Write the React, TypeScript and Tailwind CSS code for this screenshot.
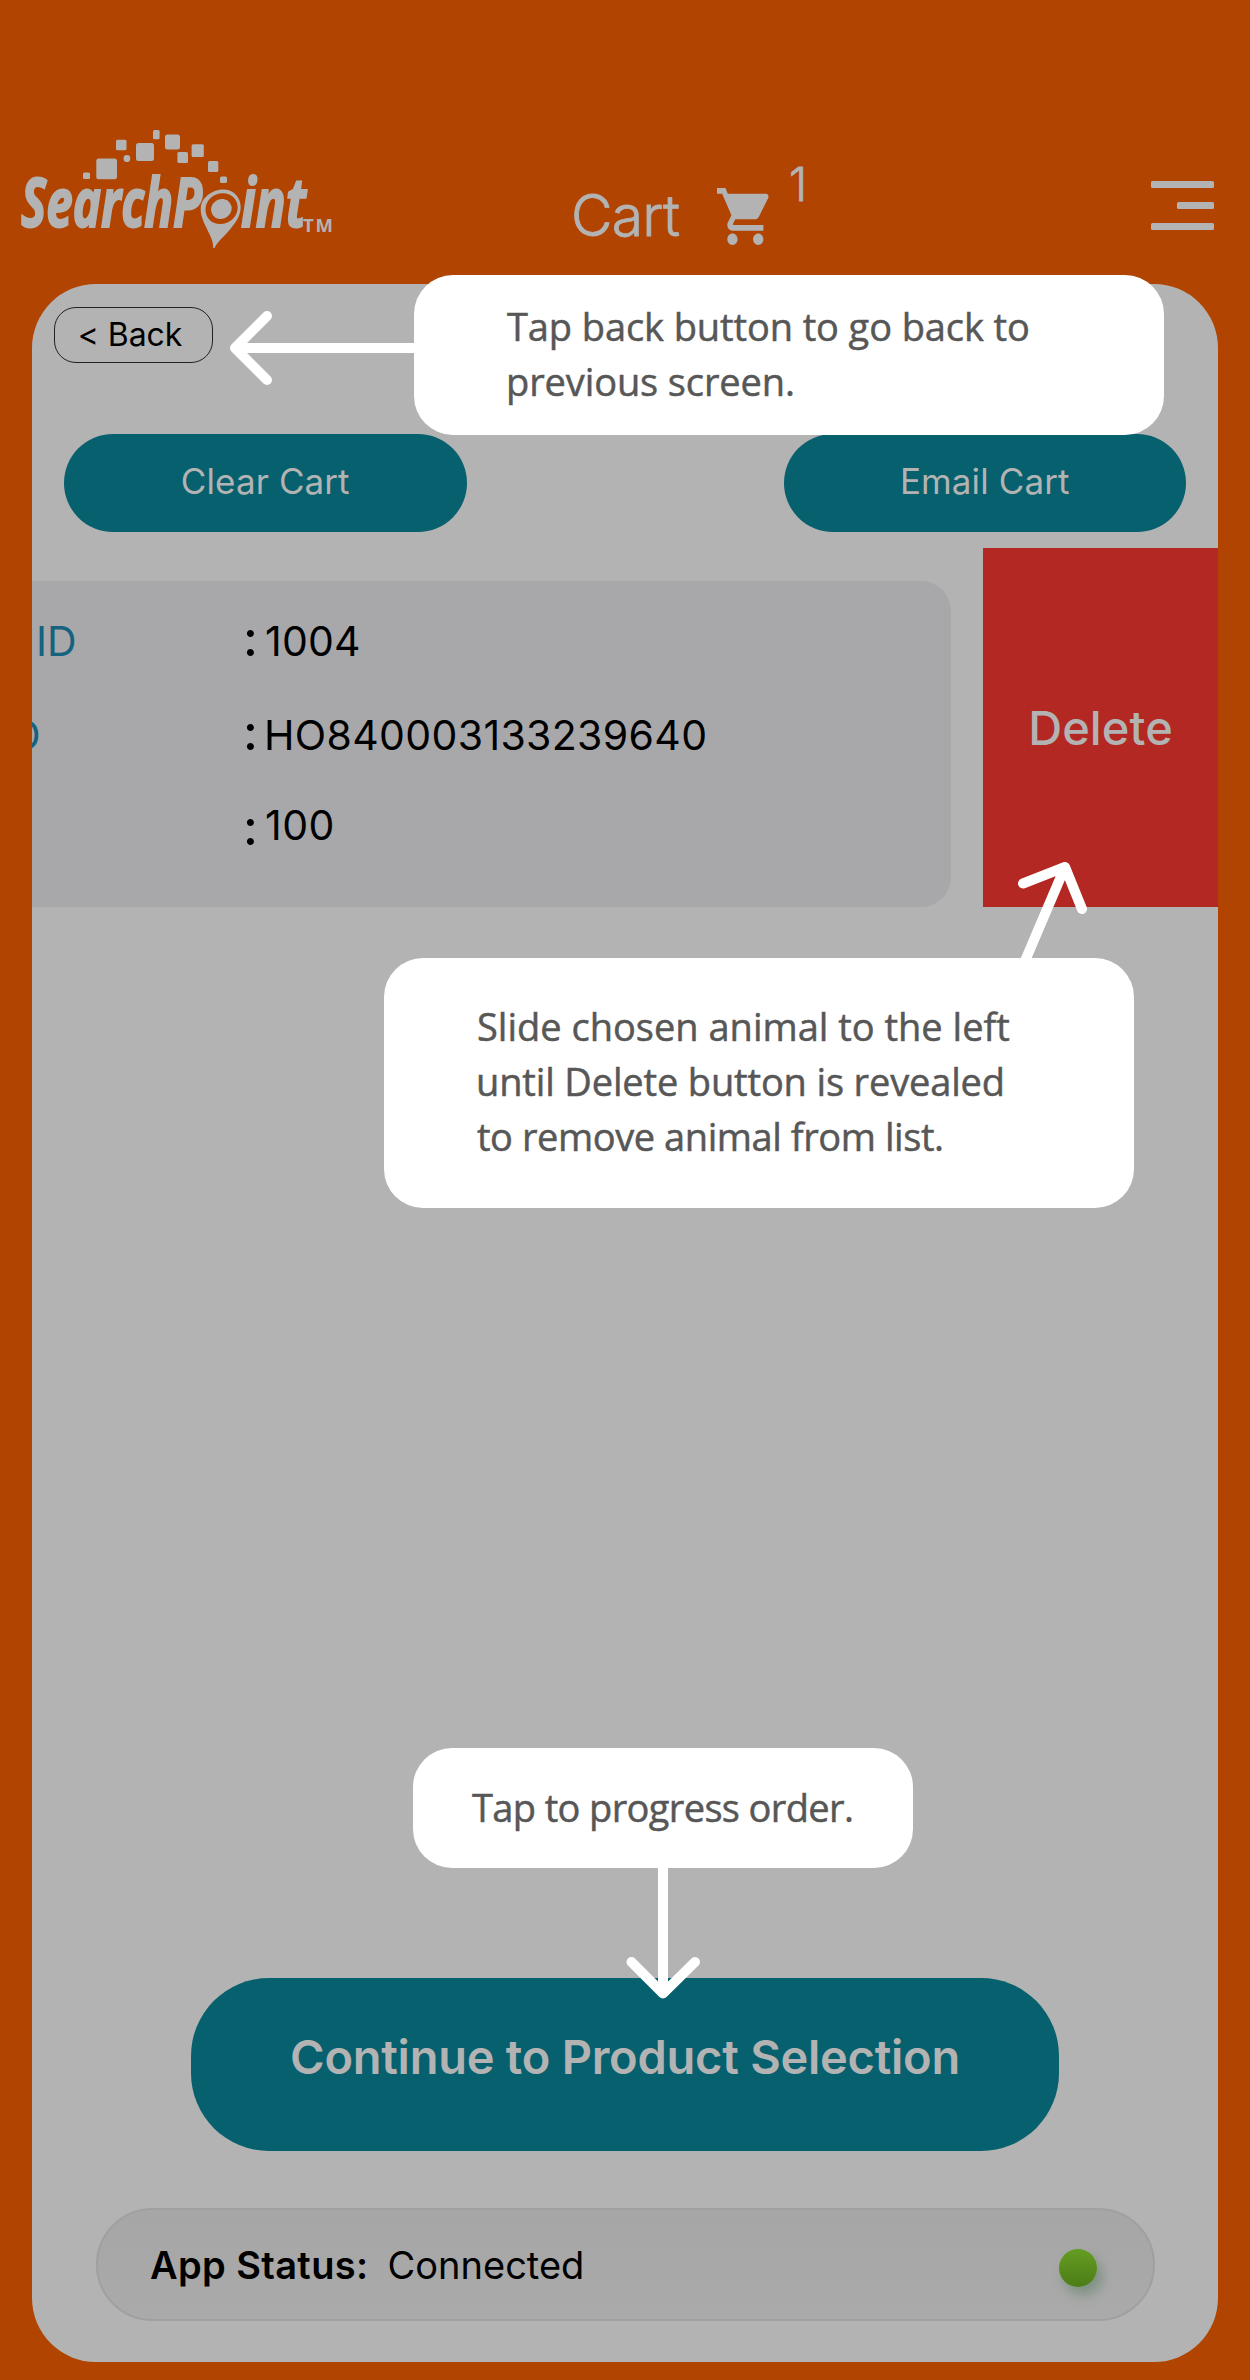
import React from 'react';

const logoSquares: [number, number, number, number, number][] = [
  [83, 172.5, 7, 6.5, 1.5],
  [96.3, 158.5, 20.7, 20.8, 2.5],
  [116, 139.8, 10.5, 10.4, 1.5],
  [123.6, 155, 6.6, 7, 3],
  [136, 143, 18, 18, 2.5],
  [153, 130, 6.6, 9.3, 1.5],
  [165, 134.5, 15, 15, 2.5],
  [177.4, 152, 10.6, 11, 1.5],
  [191.6, 144.3, 12.2, 12.8, 1.5],
  [208, 161, 10.3, 11, 1.5],
  [220, 176.5, 7, 6.5, 1.5],
];

function Logo() {
  return (
    <svg className="h-[284px] w-[360px] shrink-0" viewBox="0 0 360 284" fill="#b3b3b3" aria-label="SearchPoint">
      {logoSquares.map(([x, y, w, h, r]) => (
        <rect key={`${x}-${y}`} x={x} y={y} width={w} height={h} rx={r} />
      ))}
      <g fontFamily='"Open Sans", sans-serif' fontStyle="italic" fontWeight="700" stroke="#b3b3b3" strokeWidth="2">
        <text x="21" y="226.500" fontSize="67.500" textLength="181" lengthAdjust="spacingAndGlyphs">
          SearchP
        </text>
        <text x="241" y="226.500" fontSize="67.500" textLength="65" lengthAdjust="spacingAndGlyphs">
          int
        </text>
      </g>
      <path
        fillRule="evenodd"
        d="M224.500 189.500c9.800 0.500 16.500 8.500 16.200 18.500c-0.400 8.500-5.700 15.500-11.200 22c-6.500 7.500-12.300 12-14.900 18h-1.400c0.300-7-3.200-12.500-6.700-20c-3.200-6.800-6.500-13.500-5.700-21c1-10.200 12.700-18 23.700-17.500zM222.800 193.300c-9.500 0-17.300 7.200-17.300 16.300c0 8.700 6.300 14.400 14.700 14.400c9.500 0 17.500-7.300 17.500-16.500c0-8.500-6.500-14.200-14.900-14.200z"
      />
      <ellipse cx="221.300" cy="209" rx="10.600" ry="9.800" transform="rotate(-35 221.300 209)" />
      <text x="303" y="232" fontSize="18.500" fontWeight="700" fontFamily='"Open Sans", sans-serif' textLength="30">
        TM
      </text>
    </svg>
  );
}

function CartIcon() {
  return (
    <svg className="h-[57px] w-[54px]" viewBox="1 2 20.960 20" preserveAspectRatio="none" fill="#b3b3b3">
      <path d="M7 18c-1.100 0-1.990.9-1.990 2S5.900 22 7 22s2-.9 2-2-.9-2-2-2zM1 2v2h2l3.600 7.590-1.350 2.450c-.16.280-.25.610-.25.960 0 1.100.9 2 2 2h12v-2H7.420c-.14 0-.25-.11-.25-.25l.03-.12.900-1.630h7.450c.75 0 1.410-.41 1.750-1.030l3.580-6.490c.08-.14.120-.31.120-.48 0-.55-.45-1-1-1H5.210l-.94-2H1zm16 16c-1.100 0-1.990.9-1.990 2s.89 2 1.990 2 2-.9 2-2-.9-2-2-2z" />
    </svg>
  );
}

function Header() {
  return (
    <header className="flex h-[284px] items-start text-[#b3b3b3]">
      <Logo />
      <h1 className="mt-[186px] ml-[211px] w-[146px] text-[57px] leading-[60px] font-light tracking-[-0.73px] [-webkit-text-stroke:0.8px_#b3b3b3]">
        Cart
      </h1>
      <div className="mt-[188px]">
        <CartIcon />
      </div>
      <span className="mt-[164px] ml-[18px] w-5 text-[46px] leading-[40px] font-light [-webkit-text-stroke:0.8px_#b3b3b3]">
        1
      </span>
      <button className="mt-[181px] ml-[342px] flex w-[63px] flex-col items-end gap-[14px]" aria-label="Menu">
        <span className="h-[7px] w-[63px] rounded-[1.5px] bg-[#b3b3b3]" />
        <span className="h-[7px] w-[37px] rounded-[1.5px] bg-[#b3b3b3]" />
        <span className="h-[7px] w-[63px] rounded-[1.5px] bg-[#b3b3b3]" />
      </button>
    </header>
  );
}

function PillButton({ children }: { children: React.ReactNode }) {
  return (
    <button className="h-[98px] w-[402.500px] rounded-full bg-[#07606e] pb-[3px] text-[35px] leading-none tracking-[0.1px] text-[#b3b3b3]">
      {children}
    </button>
  );
}

function CartItem() {
  return (
    <div className="mt-[16px] flex h-[359px] items-end">
      <div className="h-[326px] w-[919px] shrink-0 rounded-r-[30px] bg-[#a8a8aa] pt-[13px] text-[41px] leading-none text-black">
        <div className="flex h-[94px] items-center">
          <span className="w-[211px] text-[#16627f]">
            <span className="ml-[4px]">ID</span>
          </span>
          <span className="w-[22px] -translate-y-[3px] text-[49px] font-medium">:</span>
          <span className="tracking-[0.2px]">1004</span>
        </div>
        <div className="flex h-[94px] items-center">
          <span className="w-[211px] text-[#16627f]">
            <span className="-ml-[32px]">ID</span>
          </span>
          <span className="w-[22px] -translate-y-[3px] text-[49px] font-medium">:</span>
          <span className="-ml-px tracking-[0.35px]">HO840003133239640</span>
        </div>
        <div className="flex h-[86px] items-center">
          <span className="w-[211px]" />
          <span className="w-[22px] translate-y-[2px] text-[49px] font-medium">:</span>
          <span className="tracking-[0.5px]">100</span>
        </div>
      </div>
      <button className="ml-8 h-[359px] w-[235px] shrink-0 bg-[#b32822] text-[47px] leading-none font-medium tracking-[0.1px] text-[#b3b3b3]">
        Delete
      </button>
    </div>
  );
}

function StatusBar() {
  return (
    <div className="mt-[57px] ml-16 flex h-[113px] w-[1059px] items-center rounded-full border-2 border-[#a0a0a0] bg-linear-to-b from-[#a6a6a6] to-[#aaaaaa] pr-[56px] pl-[52px] text-[38px] leading-none text-black">
      <span className="font-semibold tracking-[0.37px]">App Status:</span>
      <span className="ml-[19px]">Connected</span>
      <span className="mt-[6px] ml-auto size-[38px] rounded-full bg-linear-to-b from-[#659d22] to-[#4c7d17] shadow-[5px_8px_12px_rgba(60,110,70,0.4)]" />
    </div>
  );
}

const calloutText =
  'font-["Open_Sans",sans-serif] text-[38px] leading-[55px] text-[#575757] [-webkit-text-stroke:0.5px_#575757]';

export default function App() {
  return (
    <div className="relative h-[2380px] w-[1250px] overflow-hidden bg-[#b14400] font-[Inter,sans-serif]">
      <Header />

      <main className="ml-8 flex h-[2078px] w-[1186px] flex-col overflow-hidden rounded-[64px] bg-[#b3b3b3]">
        <button className="mt-[23px] ml-[22px] h-[56px] w-[159px] shrink-0 rounded-[22px] border border-[#222] pr-[7px] text-[32px] leading-none tracking-[-0.1px] text-black">
          &lt; Back
        </button>

        <div className="mt-[71px] ml-8 flex w-[1122px] justify-between">
          <PillButton>Clear Cart</PillButton>
          <PillButton>Email Cart</PillButton>
        </div>

        <CartItem />

        <button className="mt-[1071px] ml-[159px] h-[173px] w-[868px] shrink-0 rounded-[78px] bg-[#07606e] pb-[17px] text-[47px] leading-none font-semibold tracking-[-0.25px] text-[#b3b3b3]">
          Continue to Product Selection
        </button>

        <StatusBar />
      </main>

      <svg
        className="pointer-events-none absolute inset-0 h-[2380px] w-[1250px]"
        viewBox="0 0 1250 2380"
        fill="none"
        stroke="white"
        strokeWidth="10"
        strokeLinecap="round"
        strokeLinejoin="round"
      >
        <path d="M420 348H236M267 316L235 348L267 380" />
        <path d="M1022 968L1065 867M1023 883.500L1065 867L1082 909" />
        <path d="M663 1860V1992M631.500 1962L663 1993.500L695 1962" />
      </svg>

      <aside className="absolute top-[275px] left-[414px] h-[160px] w-[750px] rounded-[39px] bg-white pt-[24px] pl-[93px]">
        <p className={calloutText}>
          <span className="block tracking-[-0.1px]">Tap back button to go back to</span>
          <span className="-ml-px block tracking-[-0.11px]">previous screen.</span>
        </p>
      </aside>

      <aside className="absolute top-[958px] left-[384px] h-[250px] w-[750px] rounded-[39px] bg-white pt-[41px] pl-[93px]">
        <p className={calloutText}>
          <span className="block">Slide chosen animal to the left</span>
          <span className="-ml-px block tracking-[-0.15px]">until Delete button is revealed</span>
          <span className="block tracking-[-0.43px]">to remove animal from list.</span>
        </p>
      </aside>

      <aside className="absolute top-[1748px] left-[413px] h-[120px] w-[500px] rounded-[39px] bg-white pt-[32px] pl-[59px]">
        <p className={calloutText}>
          <span className="block tracking-[-0.63px]">Tap to progress order.</span>
        </p>
      </aside>
    </div>
  );
}
